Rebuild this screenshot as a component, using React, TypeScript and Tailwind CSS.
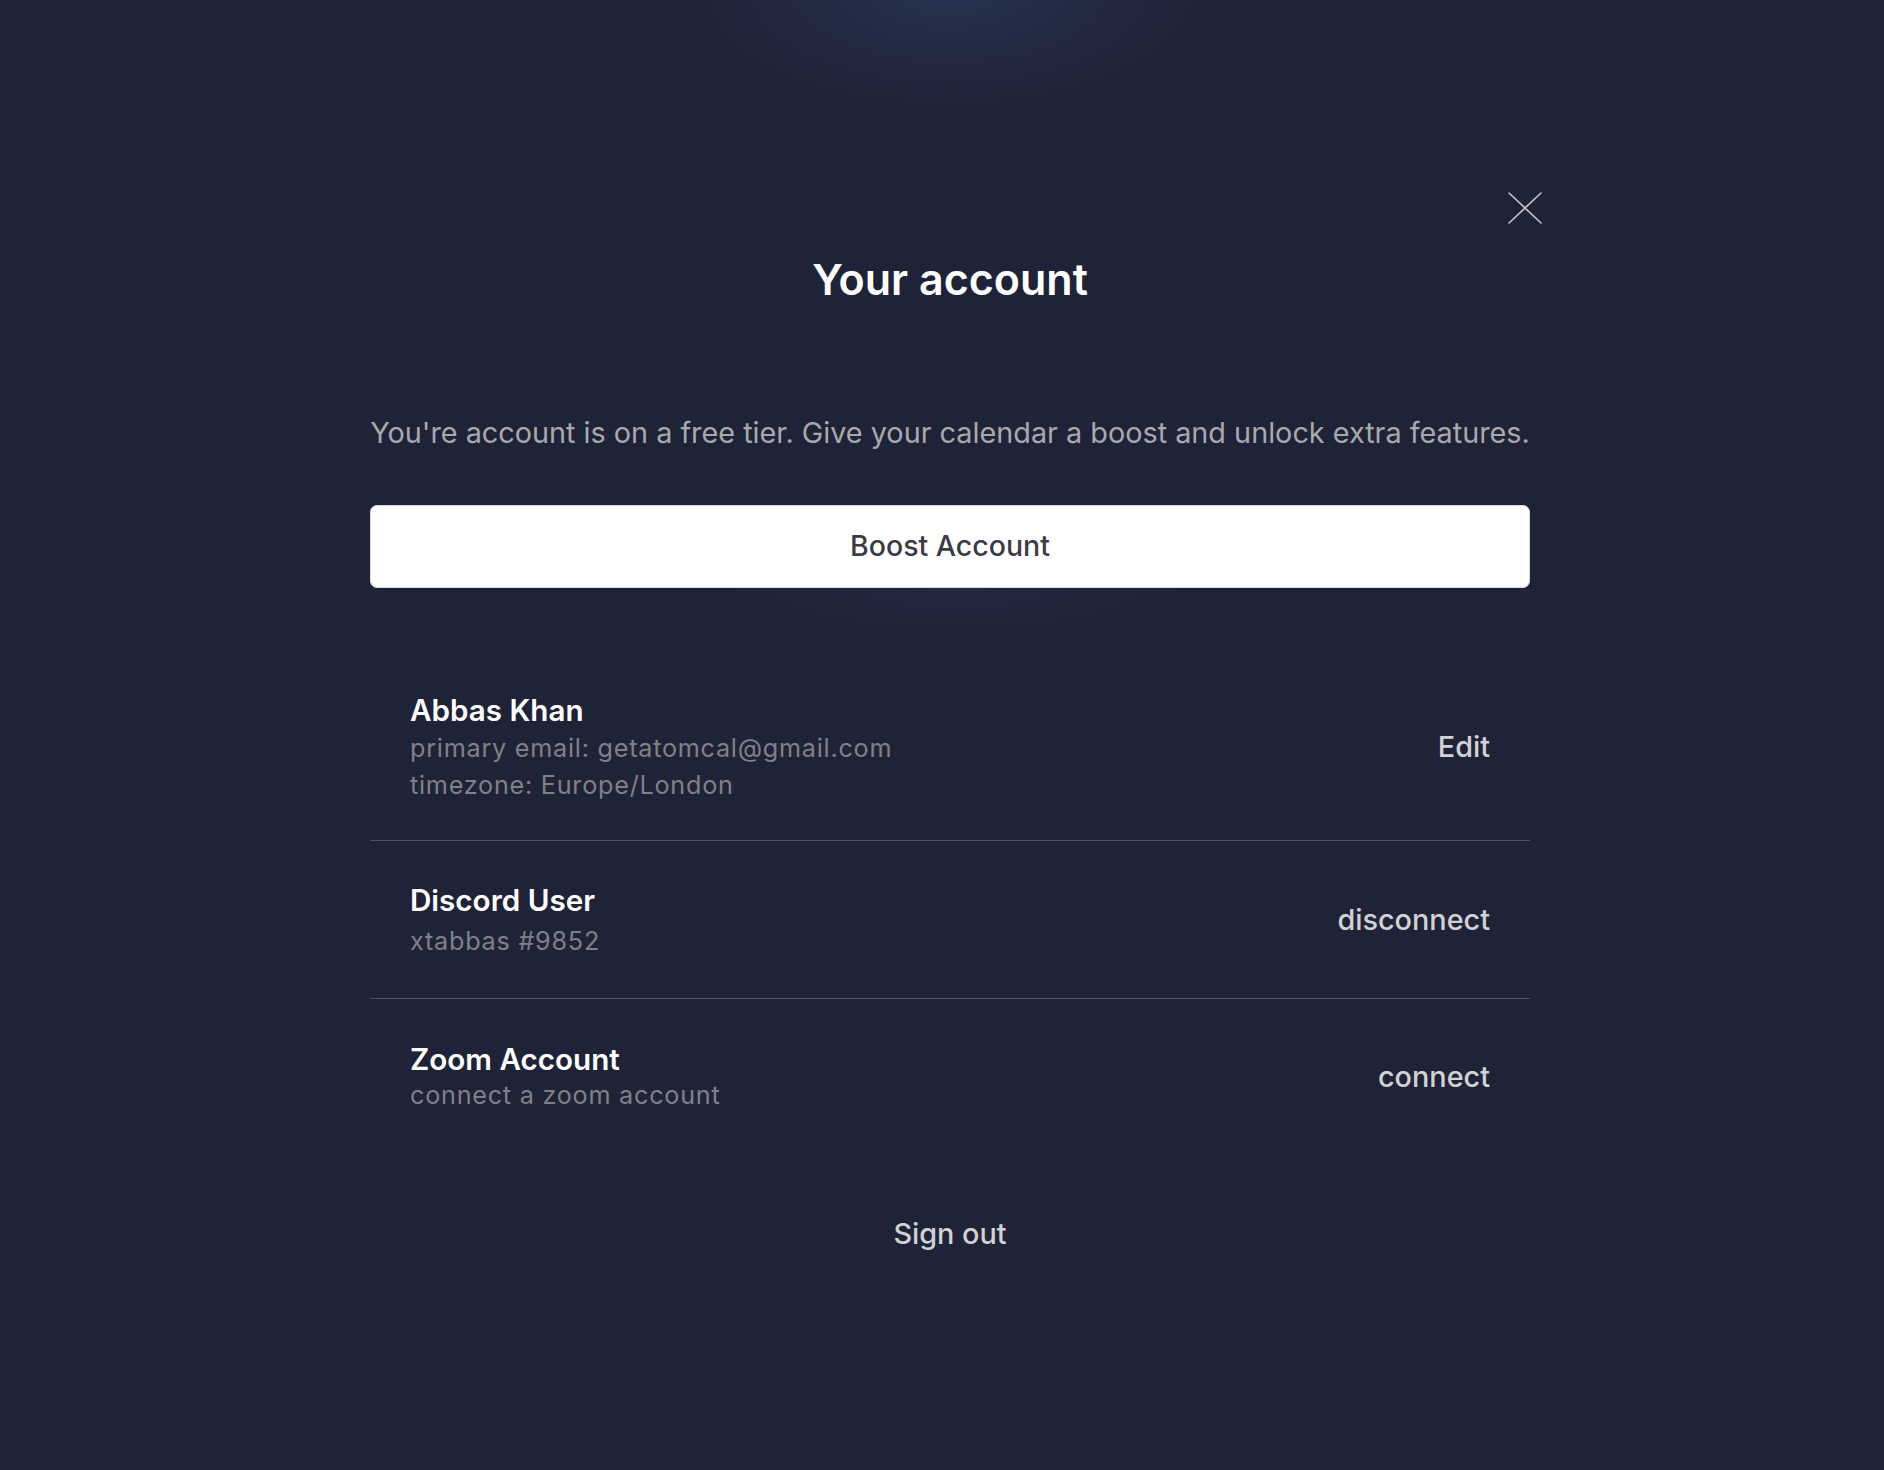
import React from 'react'

const rows = [
  {
    title: 'Abbas Khan',
    lines: ['primary email: getatomcal@gmail.com', 'timezone: Europe/London'],
    action: 'Edit',
    pad: 'pt-[104px] pb-[36px]',
    gap: 'mt-[2px]',
  },
  {
    title: 'Discord User',
    lines: ['xtabbas #9852'],
    action: 'disconnect',
    pad: 'pt-[41px] pb-[38px]',
    gap: 'mt-[5px]',
  },
  {
    title: 'Zoom Account',
    lines: ['connect a zoom account'],
    action: 'connect',
    pad: 'pt-[42px] pb-[41px]',
    gap: 'mt-0',
  },
]

const CloseIcon: React.FC = () => (
  <svg width="34" height="32" viewBox="0 0 34 32" fill="none">
    <path d="M1 1 L33 31 M33 1 L1 31" stroke="#c6c6c8" strokeWidth="1.6" strokeLinecap="round" />
  </svg>
)

const App: React.FC = () => {
  return (
    <div className="relative min-h-[1470px] w-full overflow-hidden bg-[#1f2337] font-['Inter',sans-serif]">
      {/* top glow */}
      <div className="absolute left-[690px] top-[-130px] h-[240px] w-[520px] rounded-full bg-[radial-gradient(ellipse_at_center,rgba(40,56,88,0.75)_0%,rgba(36,48,78,0.35)_45%,transparent_72%)]" />

      <div className="flex justify-center pl-[16px]">
        <div className="relative w-[1160px]">
          <button className="absolute right-[-12px] top-[192px]">
            <CloseIcon />
          </button>

          <h1 className="pt-[253px] text-center text-[43px] leading-[52px] font-semibold text-white">
            Your account
          </h1>

          <p className="mt-[108px] text-center text-[28.8px] leading-[40px] text-[#a9a9ad]">
            You're account is on a free tier. Give your calendar a boost and unlock extra features.
          </p>

          <div className="relative mt-[52px]">
            {/* faint glow under the button */}
            <div className="absolute left-[360px] top-[40px] h-[90px] w-[450px] rounded-full bg-[radial-gradient(ellipse_at_center,rgba(36,46,74,0.45)_0%,rgba(34,42,66,0.2)_50%,transparent_72%)]" />
            <button className="relative flex h-[83px] w-full items-center justify-center rounded-[7px] border border-[#d9dadd] bg-white text-[28.5px] font-medium text-[#3a3b45]">
              Boost Account
            </button>
          </div>

          <div>
            {rows.map((row, index) => (
              <div
                key={index}
                className={`flex items-center justify-between px-[40px] ${row.pad} ${
                  index < rows.length - 1 ? 'border-b border-[#50535c]' : ''
                }`}
              >
                <div>
                  <div className="text-[29.6px] leading-[36px] font-semibold text-white">{row.title}</div>
                  <div className={row.gap}>
                    {row.lines.map((line) => (
                      <div key={line} className="text-[25.2px] leading-[37px] tracking-[0.03em] text-[#808187]">
                        {line}
                      </div>
                    ))}
                  </div>
                </div>
                <button className="mb-[2px] text-[28.8px] leading-[36px] font-medium text-[#d2d2d4]">
                  {row.action}
                </button>
              </div>
            ))}
          </div>

          <div className="mt-[61px] flex justify-center">
            <button className="text-[28.8px] leading-[36px] font-medium text-[#d2d2d4]">Sign out</button>
          </div>
        </div>
      </div>
    </div>
  )
}

export default App
